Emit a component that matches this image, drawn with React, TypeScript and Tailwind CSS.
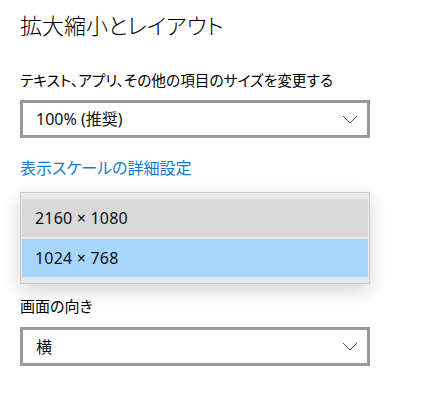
import React from "react";

const font = "font-['Segoe_UI','Noto_Sans','Noto_Sans_CJK_JP',sans-serif] [font-feature-settings:'palt']";

function Chevron() {
  return (
    <svg width="16" height="9" viewBox="0 0 16 9" fill="none">
      <path d="M1 1 L8 8 L15 1" stroke="#555" strokeWidth="1" />
    </svg>
  );
}

function Select({ value, className = "" }: { value: string; className?: string }) {
  return (
    <div
      className={`w-[350px] border-[3px] border-[#999] bg-white flex items-center justify-between pl-[13px] pr-[9px] text-[16px] text-[#111] ${className}`}
    >
      <span className="leading-[20px]">{value}</span>
      <Chevron />
    </div>
  );
}

export default function App() {
  return (
    <div className={`w-[442px] h-[412px] bg-white pl-5 overflow-hidden ${font}`}>
      <div className="pt-[10px] text-[22px] leading-[30px] font-light text-black">拡大縮小とレイアウト</div>
      <div className="mt-[30px] text-[14.7px] leading-[20px] text-black">
        テキスト、アプリ、その他の項目のサイズを変更する
      </div>
      <Select value="100% (推奨)" className="mt-[10px] h-[38px]" />
      <div className="mt-[20px] text-[16px] leading-[20px] text-[#1579d3]">表示スケールの詳細設定</div>
      <div className="mt-[14px] w-[350px] h-[92px] border border-[#cccccc] bg-[#e8e8e8] pt-[6px] px-px flex flex-col gap-[2px] shadow-[0_6px_18px_rgba(0,0,0,0.18)]">
        <div className="h-[38px] bg-[#d9d9d9] flex items-center pl-[13px] text-[16px] text-[#111] tracking-[0.2px]">
          2160 × 1080
        </div>
        <div className="h-[38px] bg-[#a6d6fb] flex items-center pl-[13px] text-[16px] text-[#111] tracking-[0.2px]">
          1024 × 768
        </div>
      </div>
      <div className="mt-[12px] text-[15px] leading-[20px] text-black">画面の向き</div>
      <Select value="横" className="mt-[11px] h-[39px]" />
    </div>
  );
}
